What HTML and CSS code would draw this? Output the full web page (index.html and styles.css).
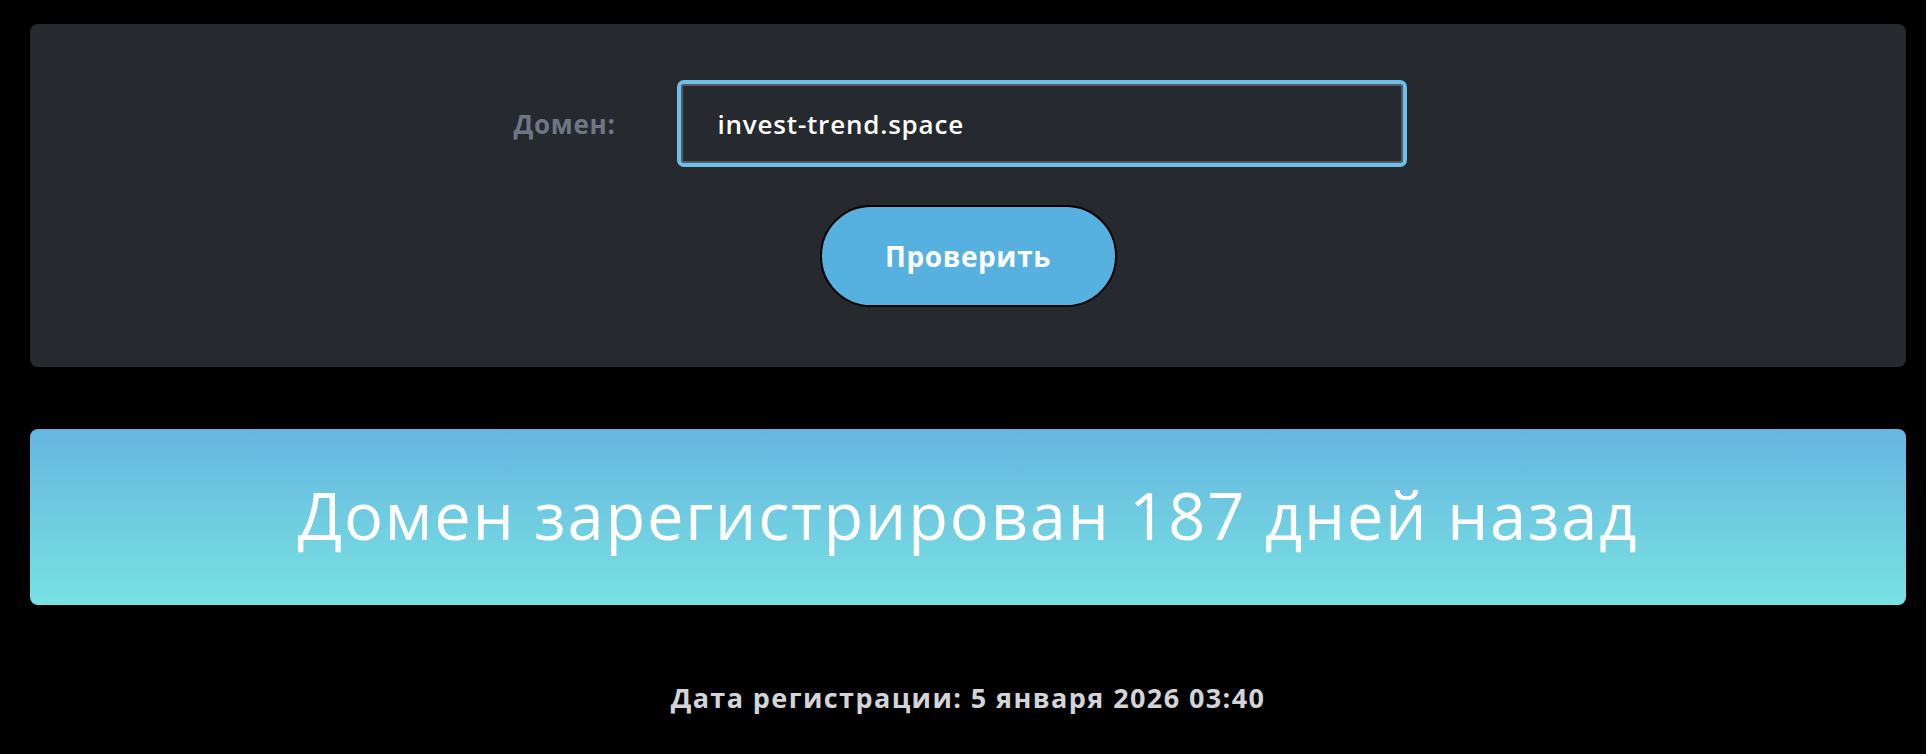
FILE: index.html
```html
<!DOCTYPE html>
<html lang="ru">
<head>
    <meta charset="UTF-8">
    <meta name="viewport" content="width=device-width, initial-scale=1.0">
    <title>Проверка возраста домена</title>
    <link rel="stylesheet" href="styles.css">
</head>
<body>

    <div class="page">
        <form class="check_card" onsubmit="return false">
            <div class="form_row">
                <label class="labelEl" for="domainInput">Домен:</label>
                <input type="text" class="domainInput" id="domainInput" value="invest-trend.space">
            </div>
            <button class="check_btn" type="submit">Проверить</button>
        </form>

        <div class="result_banner">
            Домен зарегистрирован 187 дней назад
        </div>

        <p class="reg_date">Дата регистрации: 5 января 2026 03:40</p>
    </div>

</body>
</html>
```

FILE: styles.css
```css
body{
    margin: 0;
    padding: 0;
    background-color: #000;
    font-family: "Open Sans", "Noto Sans", sans-serif;
}

.page{
    padding: 24px 20px 0 30px;
}

.check_card{
    background-color: #26292e;
    border-radius: 8px;
    height: 343px;
    box-sizing: border-box;
    padding-top: 60px;

    display: flex;
    flex-direction: column;
    align-items: center;
}

.form_row{
    display: flex;
    align-items: center;
    margin-right: 20px;
}

.labelEl{
    color: #6f7786;
    font-size: 26px;
    font-weight: 700;
    letter-spacing: 0.7px;
    width: 167px;
}

.domainInput{
    width: 722px;
    height: 79px;
    box-sizing: border-box;
    background-color: #26292e;
    border: 2px solid #555b63;
    border-radius: 3px;
    outline: 4px solid #6cc0ea;
    padding: 0 0 0 35px;
    color: #fff;
    font-family: "Open Sans", "Noto Sans", sans-serif;
    font-size: 26px;
    font-weight: 600;
    letter-spacing: 0.8px;
}

.check_btn{
    margin-top: 42px;
    width: 297px;
    height: 102px;
    border: 2px solid #000;
    border-radius: 51px;
    background-color: #56b0e0;
    color: #fff;
    font-family: "Open Sans", "Noto Sans", sans-serif;
    font-size: 28px;
    font-weight: 700;
    letter-spacing: 0.6px;
}

.result_banner{
    margin-top: 62px;
    height: 176px;
    box-sizing: border-box;
    padding-bottom: 4px;
    border-radius: 8px;
    background: linear-gradient(180deg, #66b5e0 0%, #78e2e2 100%);
    color: #fff;
    font-size: 65px;
    letter-spacing: 1.8px;

    display: flex;
    justify-content: center;
    align-items: center;
}

.reg_date{
    margin: 0;
    padding-top: 74px;
    text-align: center;
    color: #d2d4d8;
    font-size: 27px;
    font-weight: 700;
    letter-spacing: 1.4px;
}
```
